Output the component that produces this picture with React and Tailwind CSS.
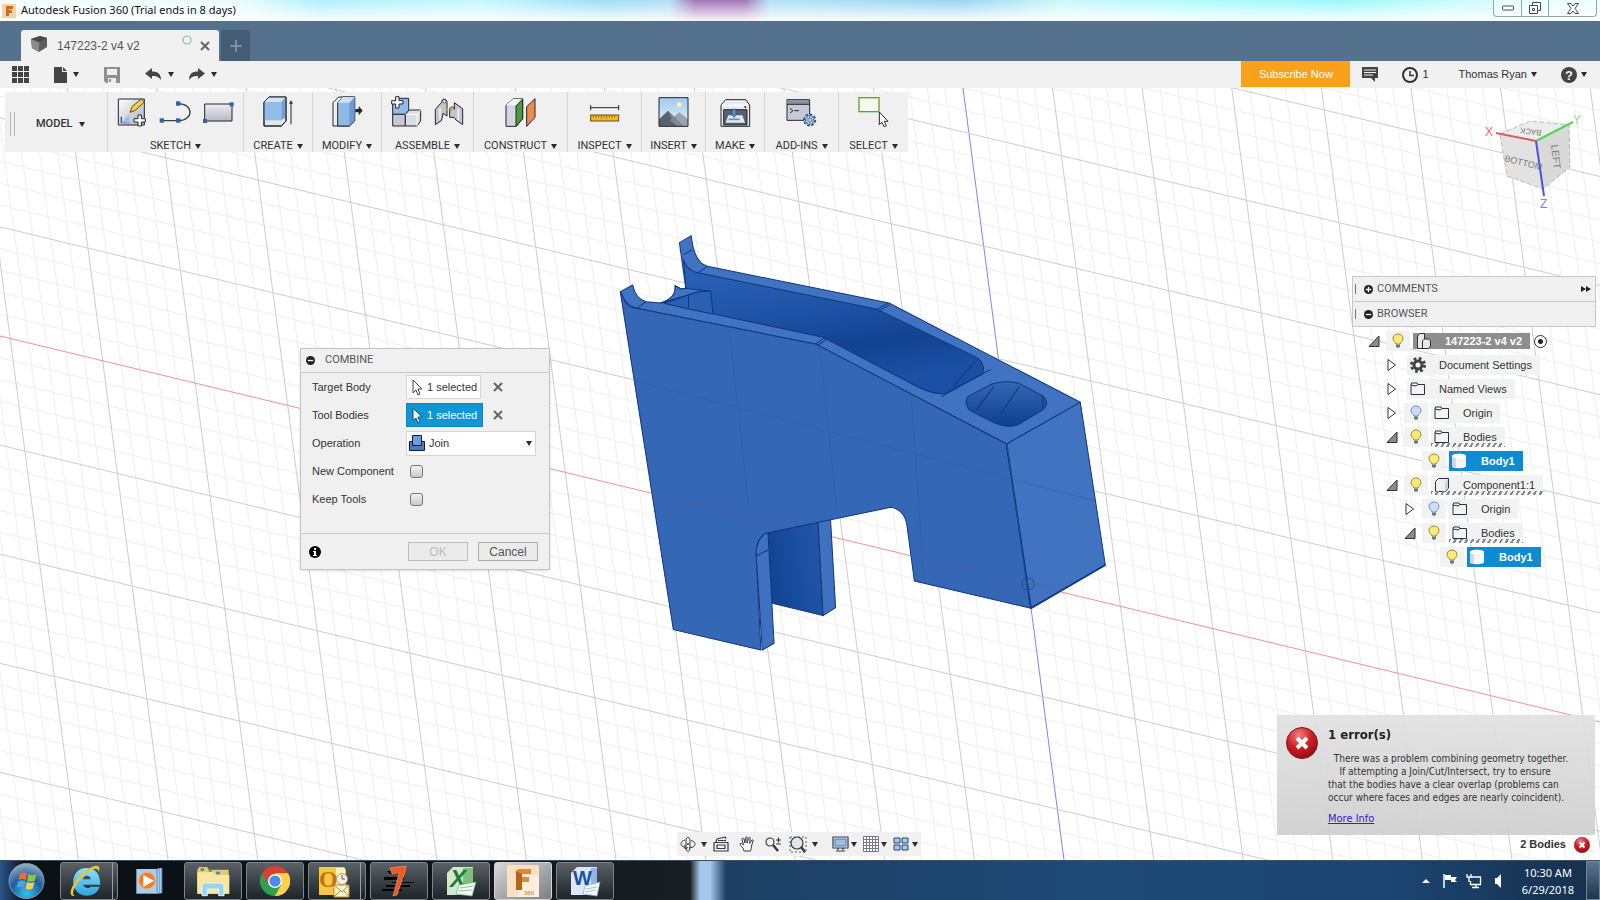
import React,{useState} from "react"

const Icon = ({vb,w,h,children,className})=>(
    <svg viewBox={vb} width={w} height={h} className={`shrink-0 ${className || ""}`} aria-hidden="true">{children}</svg>
)

const Caret = ()=>(
    <Icon vb="0 0 6 5" w="6" h="5"><path d="M0 0H6L3 5Z" fill="#2b2b2b"/></Icon>
)

const line = {stroke:"#23272e",strokeWidth:3,strokeLinejoin:"round"}

// ---------- ribbon icons ----------
const SketchIcon = ()=>(
    <Icon vb="355 290 90 93" w="30" h="31">
        <defs><linearGradient id="skg" x1="0" y1="0" x2="1" y2="1"><stop offset="0" stopColor="#fff"/><stop offset="1" stopColor="#a9aeb8"/></linearGradient></defs>
        <rect x="359" y="299" width="78" height="78" fill="url(#skg)" {...line}/>
        <path d="M368 352V370H392" fill="none" stroke="#2c5a9c" strokeWidth="4"/>
        <path d="M368 370L392 346V370Z" fill="#9dbde6"/>
        <path d="M394 339L400 322L428 299L437 308L410 333Z" fill="#f5cb55" {...line} stroke="#6b4a12"/>
        <path d="M418 347H428V358H440V368H428V380H418V368H406V358H418Z" fill="#fff" {...line}/>
    </Icon>
)
const ArcIcon = ()=>(
    <Icon vb="480 290 96 93" w="32" h="31">
        <path d="M489 364H537C585 364 585 313 537 313" fill="none" stroke="#3a3f47" strokeWidth="4"/>
        <g fill="#2f62ad"><rect x="482" y="357" width="13" height="13"/><rect x="531" y="357" width="13" height="13"/><rect x="531" y="306" width="13" height="13"/></g>
    </Icon>
)
const RectIcon = ()=>(
    <Icon vb="611 290 93 93" w="31" h="31">
        <defs><linearGradient id="rcg" x1="0" y1="0" x2="0" y2="1"><stop offset="0" stopColor="#eceef2"/><stop offset="1" stopColor="#b5b9c3"/></linearGradient></defs>
        <rect x="616" y="314" width="82" height="51" fill="url(#rcg)" {...line}/>
        <rect x="691" y="309" width="12" height="12" fill="#2f62ad"/><rect x="611" y="359" width="12" height="12" fill="#2f62ad"/>
    </Icon>
)
const CreateIcon = ()=>(
    <Icon vb="787 290 93 93" w="31" h="31">
        <path d="M790 308L805 293H856V365L842 380H790Z" fill="#dfe6f0" {...line}/>
        <path d="M790 308H842V363H790Z" fill="#92bce8"/>
        <path d="M790 308L805 293H856L842 308Z" fill="#cfe2f6"/>
        <path d="M842 308L856 293V352L842 363Z" fill="#6f9fd4"/>
        <path d="M790 308L805 293H856V365L842 380H790Z" fill="none" {...line}/>
        <path d="M871 375V312" fill="none" stroke="#23272e" strokeWidth="3"/><path d="M871 303L865 313H877Z" fill="#23272e"/>
    </Icon>
)
const ModifyIcon = ()=>(
    <Icon vb="994 290 93 93" w="31" h="31">
        <path d="M997 310L1014 293H1062V365L1046 380H997Z" fill="#eceff4" {...line}/>
        <path d="M1011 310L1026 293H1062V365L1046 380H1011Z" fill="#8fb9e6" {...line}/>
        <path d="M1046 310L1062 293V365L1046 380Z" fill="#6b9bd1"/>
        <path d="M1011 310L1026 293H1062L1046 310Z" fill="#cbe0f5"/>
        <path d="M1064 329H1074V320L1086 334L1074 348V339H1064Z" fill="#23272e"/>
    </Icon>
)
const AssembleIcon = ()=>(
    <Icon vb="1169 290 93 93" w="31" h="31">
        <path d="M1174 312L1186 297H1222V333L1212 345H1174Z" fill="#93bbe6" {...line}/>
        <path d="M1174 345H1212V380H1174Z" fill="#c4c9d2" {...line}/>
        <path d="M1212 345L1224 332H1258V365L1247 380H1212Z" fill="#dadde3" {...line}/>
        <path d="M1247 345V380M1247 345L1258 332M1212 345H1247" fill="none" stroke="#fff" strokeWidth="3"/>
        <path d="M1183 292H1193V304H1205V314H1193V326H1183V314H1171V304H1183Z" fill="#fff" {...line}/>
    </Icon>
)
const JointIcon = ()=>(
    <Icon vb="1302 290 90 93" w="30" h="31">
        <path d="M1306 330L1325 309C1325 296 1340 296 1341 309V350L1329 342L1325 363L1306 376Z" fill="#c3c7cd" {...line}/>
        <path d="M1349 332C1349 320 1362 320 1363 330V310L1388 328V376L1368 362L1362 354H1349Z" fill="#c3c7cd" {...line}/>
        <path d="M1320 325V360M1375 328V362" stroke="#f1f2f4" strokeWidth="5"/>
        <circle cx="1333" cy="306" r="5" fill="#fff" stroke="#23272e" strokeWidth="2"/>
        <path d="M1338 326L1344 334M1355 322V336" stroke="#e09a2b" strokeWidth="4"/>
    </Icon>
)
const ConstructIcon = ()=>(
    <Icon vb="74 48 93 96" w="31" h="32">
        <path d="M77 76L99 56H127V116L108 139H77Z" fill="#d3d6dc" {...line}/>
        <path d="M77 76L99 56H127L108 76Z" fill="#f6f7f9"/>
        <path d="M107 78L127 57V116L107 139Z" fill="#4e9a3f" {...line}/>
        <path d="M139 80L164 56V112L139 139Z" fill="#ef8a50" {...line}/>
    </Icon>
)
const InspectIcon = ()=>(
    <Icon vb="326 48 90 96" w="30" h="32">
        <path d="M328 83H412M328 75V91M412 75V91" {...line} fill="none"/>
        <rect x="328" y="105" width="84" height="18" fill="#edb92e" stroke="#6e4c0c" strokeWidth="3"/>
        <path d="M336 106V112M344 106V115M352 106V112M360 106V115M368 106V112M376 106V115M384 106V112M392 106V115M400 106V112" stroke="#6e4c0c" strokeWidth="2"/>
    </Icon>
)
const InsertIcon = ()=>(
    <Icon vb="533 48 93 96" w="31" h="32">
        <defs><linearGradient id="isg" x1="0" y1="0" x2="0" y2="1"><stop offset="0" stopColor="#9ec9ee"/><stop offset="1" stopColor="#e8f4fc"/></linearGradient></defs>
        <rect x="536" y="53" width="87" height="86" fill="url(#isg)"/>
        <circle cx="597" cy="74" r="7" fill="#fff3b8"/>
        <path d="M575 115L597 97L623 118V139H575Z" fill="#9aa3ae"/>
        <path d="M536 118L563 92L610 139H536Z" fill="#5a626e"/>
        <path d="M563 92L575 116L568 120L590 139H610Z" fill="#7f8894"/>
        <rect x="536" y="53" width="87" height="86" fill="none" {...line}/>
    </Icon>
)
const MakeIcon = ()=>(
    <Icon vb="719 48 93 96" w="31" h="32">
        <path d="M722 75L736 59H796L808 75V139H722Z" fill="#e9ebee" {...line}/>
        <path d="M724 76H806" stroke="#fff" strokeWidth="4"/>
        <rect x="730" y="89" width="70" height="46" fill="#59616d" {...line}/>
        <path d="M744 106H786L794 128H736Z" fill="#e3e8ee"/>
        <path d="M755 88H767V104L761 112L755 104Z" fill="#5590d6" stroke="#1d3f73" strokeWidth="2"/>
        <path d="M745 118H778" stroke="#5590d6" strokeWidth="5"/>
        <circle cx="795" cy="81" r="3" fill="#23272e"/>
    </Icon>
)
const AddinsIcon = ()=>(
    <Icon vb="917 48 93 96" w="31" h="32">
        <rect x="920" y="59" width="68" height="62" fill="#c6cad6" {...line}/>
        <rect x="922" y="61" width="64" height="11" fill="#8d909c"/>
        <path d="M920 73H988" {...line}/>
        <path d="M929 85L938 92L929 99M942 92H956" fill="none" stroke="#23272e" strokeWidth="3"/>
        <circle cx="988" cy="120" r="17" fill="#bdd6f1" stroke="#2b4d7d" strokeWidth="5" strokeDasharray="8 5"/>
        <circle cx="988" cy="120" r="13" fill="#cfe1f5" stroke="#2b4d7d" strokeWidth="2"/>
        <path d="M988 106V134M974 120H1002M978 110L998 130M998 110L978 130" stroke="#2b4d7d" strokeWidth="2"/>
        <circle cx="988" cy="120" r="5" fill="#fff" stroke="#2b4d7d" strokeWidth="2"/>
    </Icon>
)
const SelectIcon = ()=>(
    <Icon vb="1133 48 93 96" w="31" h="32">
        <rect x="1136" y="53" width="60" height="42" fill="#f5f9ef" stroke="#6aa02c" strokeWidth="4"/>
        <path d="M1197 96V134L1205 127L1211 140L1218 137L1212 124H1223Z" fill="#fff" {...line}/>
    </Icon>
)

const ribbon = [
    {name:"SKETCH",w:"w-[136px]",icons:[SketchIcon,ArcIcon,RectIcon]},
    {name:"CREATE",w:"w-[69px]",icons:[CreateIcon]},
    {name:"MODIFY",w:"w-[69px]",icons:[ModifyIcon]},
    {name:"ASSEMBLE",w:"w-[92px]",icons:[AssembleIcon,JointIcon]},
    {name:"CONSTRUCT",w:"w-[94px]",icons:[ConstructIcon]},
    {name:"INSPECT",w:"w-[74px]",icons:[InspectIcon]},
    {name:"INSERT",w:"w-[64px]",icons:[InsertIcon]},
    {name:"MAKE",w:"w-[59px]",icons:[MakeIcon]},
    {name:"ADD-INS",w:"w-[74px]",icons:[AddinsIcon]},
    {name:"SELECT",w:"w-[70px]",icons:[SelectIcon]},
]

function Ribbon(){
    return (
        <div className="absolute left-[5px] top-1 flex h-[60px] bg-[#f0f0f0] font-[Roboto,sans-serif] text-[11px] text-[#333]">
            <div className="flex w-[102px] items-center pt-1">
                <div className="ml-[5px] h-6 w-[5px] border-x border-[#b5b5b5]"></div>
                <button className="ml-[21px] flex items-center gap-1.5 font-medium">MODEL <Caret/></button>
            </div>
            {ribbon.map((g)=>(
                <div className={`${g.w} flex flex-col items-center justify-between border-l border-[#d4d4d4] pt-1`} key={g.name}>
                    <div className="flex h-8 items-start gap-3">
                        {g.icons.map((I,i)=>(<button key={i} aria-label={`${g.name} ${i + 1}`}><I/></button>))}
                    </div>
                    <button className="flex items-center gap-1 leading-3">{g.name} <Caret/></button>
                </div>
            ))}
        </div>
    )
}

// ---------- 3d scene ----------
// grid lines are parallel, a major one at every fifth step
const gridV = []
for(let i=-65;i<=45;i++) gridV.push({x:963 + i * 17.92,major:i % 5 === 0,axis:i === 0})
const gridH = []
for(let i=-30;i<=30;i++) gridH.push({y:248 + i * 21.82,major:i % 5 === 0,axis:i === 0})

function GridLines(){
    return (
        <g fill="none">
            {[false,true].map((m)=>(
                <g key={String(m)} stroke={m ? "#cbcdce" : "#edeff0"}>
                    {gridV.filter(l=>l.major === m).map((l)=>(
                        <path key={l.x} d={`M${l.x} 0L${l.x + 101} 772`} stroke={l.axis ? "#8585ea" : undefined}/>
                    ))}
                    {gridH.filter(l=>l.major === m).map((l)=>(
                        <path key={l.y} d={`M0 ${l.y}L1600 ${l.y + 386}`} stroke={l.axis ? "#f29292" : undefined}/>
                    ))}
                </g>
            ))}
        </g>
    )
}

function Scene(){
    const front = "M60 215L76 248Q88 264 108 265L640 373L1203 672L1275 1165L930 1083L908 915Q900 868 860 862L490 940Q463 958 462 1000L476 1290L217 1229Z"
    return (
        <svg viewBox="0 0 1600 772" preserveAspectRatio="xMidYMid slice" className="absolute inset-0 h-full w-full" role="img" aria-label="Model view">
            <defs>
                <linearGradient id="wall" x1="0" y1="0" x2="0.35" y2="1"><stop offset="0" stopColor="#2d64b8"/><stop offset="0.45" stopColor="#1f54a9"/><stop offset="0.75" stopColor="#134391"/><stop offset="1" stopColor="#1a4fa4"/></linearGradient>
                <linearGradient id="leg" x1="1" y1="0" x2="0" y2="0.3"><stop offset="0" stopColor="#2458aa"/><stop offset="1" stopColor="#134596"/></linearGradient>
                <linearGradient id="hole" x1="0" y1="0" x2="0" y2="1"><stop offset="0" stopColor="#3467b5"/><stop offset="1" stopColor="#0f3f8e"/></linearGradient>
                <clipPath id="faces"><path d={front}/><path d="M1203 672L1421 547L1495 1035L1275 1165Z"/></clipPath>
            </defs>
            <GridLines/>
            <g transform="translate(600 132) scale(0.338 0.3333)" stroke="#12377c" strokeWidth="3" strokeLinejoin="round">
                <path d="M497 940L645 905L660 1187L510 1150Z" fill="url(#leg)"/>
                <path d="M645 905L682 897L697 1163L660 1187Z" fill="#3e72c0"/>
                <path d="M60 215L97 195Q104 236 137 245L180 249Q228 232 222 197L240 207L254 205L235 68L270 47Q278 128 318 139L855 249L1421 547L1203 672L640 373L108 265Q80 262 60 215Z" fill="#4074c2"/>
                <path d="M254 205L247 118Q258 154 290 158L820 268L1110 410Q1142 428 1132 462L1018 522Q975 522 930 495L660 352L190 250L240 222Z" fill="url(#wall)"/>
                <path d="M190 250L262 224Q300 210 328 214L334 282L262 267Z" fill="#2a60b3"/>
                <path d="M180 249L262 224Q300 210 325 214L254 205L240 207L222 197Q228 232 180 249Z" fill="#4074c2"/>
                <path d="M262 224V265M247 104L272 90M290 158L318 139M108 265L137 245M820 268L850 250M826 272L857 254M636 373L666 352M644 376L672 357M1110 425Q1070 470 1045 500" fill="none"/>
                <path d="M1010 530L1155 448" fill="none"/>
                <path d="M1088 530L1160 492Q1200 480 1240 490L1310 528Q1332 548 1312 568L1235 615Q1200 625 1165 608L1095 572Q1075 550 1088 530Z" fill="url(#hole)"/>
                <path d="M1112 572L1165 500M1185 582L1240 500M1310 530V565" fill="none"/>
                <path d={front} fill="#3568b7"/>
                <path d="M1203 672L1421 547L1495 1035L1275 1165Z" fill="#4174c1"/>
                <path d="M490 940Q463 958 462 1000L480 1290L515 1270L497 940Z" fill="#3e72c0"/>
                <path d="M462 1008L497 990" fill="none"/>
                <path d="M1275 1165L1495 1035M1203 672L1275 1165" fill="none" strokeWidth="5"/>
                <circle cx="1266" cy="1092" r="18" fill="none" stroke="#264f95"/>
                <g clipPath="url(#faces)" stroke="#2f5ca6" strokeWidth="3" opacity="0.5" fill="none">
                    <path d="M0 455L1568 870M380 300L440 860M650 380L710 960M920 520L960 1100M1170 420L1290 1300M0 -20L1568 520"/>
                    <path d="M0 782L1568 1163" stroke="#6a559c"/>
                </g>
            </g>
        </svg>
    )
}

function ViewCube(){
    return (
        <svg viewBox="1480 24 110 100" className="absolute right-2.5 top-6 h-[100px] w-[110px]" role="img" aria-label="View cube">
            <path d="M1500 46L1530 33L1569 37L1536 53Z" fill="#ededed"/>
            <path d="M1500 46L1536 53L1543 101L1507 88Z" fill="#e2e2e2"/>
            <path d="M1536 53L1569 37L1570 79L1543 101Z" fill="#d9d9d9"/>
            <path d="M1500 46L1530 33L1569 37L1570 79L1543 101L1507 88Z" fill="none" stroke="#bdbdbd" strokeDasharray="5 2"/>
            <g fontFamily="Liberation Sans, sans-serif" fill="#7d7d7d">
                <text x="1504" y="73" fontSize="9" transform="rotate(14 1504 73)">BOTTOM</text>
                <text x="1551" y="57" fontSize="10" transform="rotate(83 1551 57)">LEFT</text>
                <text x="1522" y="39" fontSize="8" transform="rotate(187 1532 40)">BACK</text>
            </g>
            <path d="M1496 45L1536 53" stroke="#e05a5a" strokeWidth="2"/>
            <path d="M1536 53L1573 34" stroke="#52d452" strokeWidth="2"/>
            <path d="M1536 53L1544 108" stroke="#5252dc" strokeWidth="2"/>
            <g fontFamily="Liberation Sans, sans-serif" fontSize="12">
                <text x="1485" y="48" fill="#ef6b6b">X</text>
                <text x="1573" y="36" fill="#8be88b">Y</text>
                <text x="1540" y="120" fill="#8080f0">Z</text>
            </g>
        </svg>
    )
}

// ---------- combine dialog ----------
const CursorIcon = ({dark})=>(
    <Icon vb="0 0 12 17" w="12" h="17"><path d="M2 1V14L5 11L7 16L9 15L7 10H11Z" fill={dark ? "#e8f4fb" : "#fff"} stroke={dark ? "#1d4f6e" : "#444"} strokeLinejoin="round"/></Icon>
)
const CrossIcon = ()=>(
    <Icon vb="0 0 10 10" w="10" h="10"><path d="M1 1L9 9M9 1L1 9" stroke="#666" strokeWidth="2"/></Icon>
)
const MinusDot = ({plus})=>(
    <Icon vb="0 0 10 10" w="9" h="9"><circle cx="5" cy="5" r="5" fill="#222"/><path d={plus ? "M2 5H8M5 2V8" : "M2 5H8"} stroke="#fff" strokeWidth="1.5"/></Icon>
)

const rowClass = "flex h-7 items-center"
const labelClass = "w-[94px] shrink-0"
const checkClass = "ml-1 size-[13px] appearance-none rounded-[3px] border border-[#777] bg-gradient-to-b from-[#f2f2f2] to-[#c9c9c9]"

function CombineDialog(){
    const [op,setOp] = useState("Join")
    return (
        <div className="absolute left-[300px] top-[260px] w-[250px] border border-[#c4c4c4] bg-[#f0f0f0] text-[11px] text-[#333] shadow-sm">
            <div className="flex h-6 items-center gap-2.5 border-b border-[#c8c8c8] pl-[5px] font-[Roboto,sans-serif] text-[#555]"><MinusDot/> COMBINE</div>
            <div className="h-40 pl-[11px]">
                <div className={rowClass}>
                    <span className={labelClass}>Target Body</span>
                    <button className="flex h-6 w-[75px] items-center gap-1 whitespace-nowrap border border-[#d5d5d5] bg-white pl-1"><CursorIcon/>1 selected</button>
                    <button className="ml-3" aria-label="Clear target body"><CrossIcon/></button>
                </div>
                <div className={rowClass}>
                    <span className={labelClass}>Tool Bodies</span>
                    <button className="flex h-6 w-[77px] items-center gap-1 whitespace-nowrap border border-[#0d86bd] bg-[#0f96d4] pl-1 text-white"><CursorIcon dark/>1 selected</button>
                    <button className="ml-2.5" aria-label="Clear tool bodies"><CrossIcon/></button>
                </div>
                <div className={rowClass}>
                    <label className={labelClass} htmlFor="op">Operation</label>
                    <div className="flex h-[25px] w-[130px] items-center border border-[#d5d5d5] bg-white pl-0.5 pr-[3px]">
                        <Icon vb="0 0 16 16" w="16" h="16"><path d="M0.500 6.500H15.500V15.500H0.500Z" fill="#4a7dbd" stroke="#0d1d33"/><path d="M3.500 0.500H12.500V10.500H3.500Z" fill="#6a9ddb" stroke="#0d1d33"/></Icon>
                        <select id="op" value={op} onChange={(e)=>setOp(e.target.value)} className="ml-1 h-full flex-1 appearance-none bg-white outline-none">
                            <option>Join</option>
                            <option>Cut</option>
                            <option>Intersect</option>
                        </select>
                        <Caret/>
                    </div>
                </div>
                <div className={rowClass}>
                    <label className={labelClass} htmlFor="newc">New Component</label>
                    <input id="newc" type="checkbox" className={checkClass}/>
                </div>
                <div className={rowClass}>
                    <label className={labelClass} htmlFor="keep">Keep Tools</label>
                    <input id="keep" type="checkbox" className={checkClass}/>
                </div>
            </div>
            <div className="flex h-9 items-center border-t border-[#c8c8c8] pl-2 pr-[11px]">
                <Icon vb="0 0 12 12" w="12" h="12"><circle cx="6" cy="6" r="6" fill="#000"/><path d="M5 2H7V4H5ZM4 5H7V9H8V10H4V9H5V6H4Z" fill="#fff"/></Icon>
                <button disabled className="ml-auto h-[19px] w-[60px] border border-[#bdbdbd] bg-[#ebebeb] text-xs leading-none text-[#bbb]">OK</button>
                <button className="ml-2.5 h-[19px] w-[60px] border border-[#adadad] bg-[#ebebeb] text-xs leading-none text-[#555]">Cancel</button>
            </div>
        </div>
    )
}

// ---------- browser tree ----------
const Bulb = ({off})=>(
    <Icon vb="0 0 12 16" w="12" h="16">
        <path d="M6 1C2.500 1 1 3.500 1 5.500C1 8 3.500 9 4 11H8C8.500 9 11 8 11 5.500C11 3.500 9.500 1 6 1Z" fill={off ? "#c9defa" : "#fbe97a"} stroke={off ? "#7390bd" : "#a08a28"}/>
        <path d="M4 11.500H8V14L6 15L4 14Z" fill="#777"/>
    </Icon>
)
const Folder = ()=>(
    <Icon vb="0 0 16 14" w="16" h="14"><path d="M1 3V12.500H14.500V2.500H8L7 1H1.500L1 3L6 4L8 2.500" fill="#f4f5f6" stroke="#2c313a"/></Icon>
)
const Gear = ()=>(
    <Icon vb="0 0 16 16" w="16" h="16"><circle cx="8" cy="8" r="6.500" fill="none" stroke="#444" strokeWidth="3" strokeDasharray="2.700 2.400"/><circle cx="8" cy="8" r="4" fill="none" stroke="#444" strokeWidth="3"/></Icon>
)
const DocIcon = ()=>(
    <Icon vb="0 0 16 16" w="16" h="16"><path d="M1.500 3L4 .5H8.500V6H12.500L14.500 8V13L12.500 15.500H1.500Z" fill="#e8eaed" stroke="#333"/><path d="M6.500 15V8L8.500 6" fill="none" stroke="#333"/></Icon>
)
const BoxIcon = ()=>(
    <Icon vb="0 0 16 16" w="16" h="16"><path d="M1.500 4.500L4.500 1.500H14.500V11L11.500 14.500H1.500Z" fill="#eef0f2" stroke="#2c313a"/><path d="M11 5V14L14 11V2Z" fill="#cfd2d6"/></Icon>
)
const Cylinder = ()=>(
    <Icon vb="0 0 14 16" w="14" h="16"><path d="M0 3C0 0 14 0 14 3V13C14 16 0 16 0 13Z" fill="#f4f6f8"/><path d="M0 4V13C0 14 2 15 4 15V5Z" fill="#d3d8dd"/><ellipse cx="7" cy="3" rx="7" ry="2.200" fill="#fff"/></Icon>
)
const Arrow = ({open})=>(
    <Icon vb="0 0 12 14" w="12" h="14">
        {open ? <path d="M1 12.500H11V2Z" fill="#8b8b8b" stroke="#333"/> : <path d="M2 1.500V12.500L9.500 7Z" fill="#fff" stroke="#333"/>}
    </Icon>
)

const tree = [
    {text:"147223-2 v4 v2",pad:"pl-[10px]",arrow:"open",bulb:"on",icon:DocIcon,kind:"root"},
    {text:"Document Settings",pad:"pl-[28px]",arrow:"closed",icon:Gear},
    {text:"Named Views",pad:"pl-[28px]",arrow:"closed",icon:Folder},
    {text:"Origin",pad:"pl-[28px]",arrow:"closed",bulb:"off",icon:Folder},
    {text:"Bodies",pad:"pl-[28px]",arrow:"open",bulb:"on",icon:Folder,kind:"hatched"},
    {text:"Body1",pad:"pl-[70px]",bulb:"on",icon:Cylinder,kind:"body"},
    {text:"Component1:1",pad:"pl-[28px]",arrow:"open",bulb:"on",icon:BoxIcon,kind:"hatched"},
    {text:"Origin",pad:"pl-[46px]",arrow:"closed",bulb:"off",icon:Folder},
    {text:"Bodies",pad:"pl-[46px]",arrow:"open",bulb:"on",icon:Folder,kind:"hatched"},
    {text:"Body1",pad:"pl-[88px]",bulb:"on",icon:Cylinder,kind:"body"},
]
const kinds = {
    root:"h-4 bg-[#8e8e8e] pr-2 font-bold text-white",
    body:"h-5 bg-[#0d8bd3] pr-2 font-bold text-white",
    hatched:"h-5 bg-[#f1f2f2] pr-2",
}

function BrowserPanel(){
    return (
        <div className="absolute right-1 top-[188px] w-[244px] text-[11px] text-[#333]">
            <div className="border border-[#c8c8c8] bg-[#f0f0f0] font-[Roboto,sans-serif] text-[#555]">
                <div className="flex h-[25px] items-center border-b border-[#c8c8c8] pl-0.5 pr-1">
                    <div className="h-2.5 w-px bg-[#777]"></div>
                    <button className="ml-2 flex items-center gap-1"><MinusDot plus/> COMMENTS</button>
                    <button className="ml-auto" aria-label="Expand"><Icon vb="0 0 10 6" w="10" h="6"><path d="M0 0L5 3L0 6ZM5 0L10 3L5 6Z" fill="#222"/></Icon></button>
                </div>
                <div className="flex h-6 items-center pl-0.5">
                    <div className="h-2.5 w-px bg-[#777]"></div>
                    <button className="ml-2 flex items-center gap-1"><MinusDot/> BROWSER</button>
                </div>
            </div>
            <ul className="pt-0.5">
                {tree.map((n,i)=>(
                    <li className={`${n.pad} flex h-6 items-center`} key={i}>
                        {n.arrow ? <button className="flex w-6 justify-center" aria-label={`Toggle ${n.text}`}><Arrow open={n.arrow === "open"}/></button> : null}
                        {n.bulb ? <button className="flex h-5 w-6 items-center justify-center bg-[#f1f2f2]" aria-label={`Show ${n.text}`}><Bulb off={n.bulb === "off"}/></button> : null}
                        <div className={`${kinds[n.kind] || "h-5 bg-[#f1f2f2] pr-2"} relative ml-[3px] flex items-center`}>
                            <span className="flex w-8 pl-[3px]"><n.icon/></span>
                            {n.text}
                            {n.kind === "hatched" ? <span className="absolute inset-x-0 bottom-0 h-1 bg-[repeating-linear-gradient(120deg,#7c8794_0_2px,transparent_2px_5px)]"></span> : null}
                        </div>
                        {n.kind === "root" ? <input type="radio" name="active" defaultChecked aria-label="Activate" className="ml-1 size-[13px] appearance-none rounded-full border border-[#333] bg-[radial-gradient(#222_0_2px,#fff_3px)]"/> : null}
                    </li>
                ))}
            </ul>
        </div>
    )
}

// ---------- error toast ----------
const ErrorDot = ({size})=>(
    <Icon vb="0 0 32 32" w={size} h={size}>
        <defs><radialGradient id="err" cx="0.4" cy="0.25" r="0.8"><stop offset="0" stopColor="#f08080"/><stop offset="0.5" stopColor="#cf1f26"/><stop offset="1" stopColor="#8d0c12"/></radialGradient></defs>
        <circle cx="16" cy="16" r="15.500" fill="url(#err)" stroke="#7d1a1e"/>
        <path d="M11 11L21 21M21 11L11 21" stroke="#fff" strokeWidth="4"/>
    </Icon>
)

function ErrorToast(){
    return (
        <div className="absolute bottom-1 right-[5px] w-[318px]">
            <div className="flex h-[120px] gap-[10px] bg-gradient-to-b from-[#e2e2e2]/95 to-[#d0d0d0]/95 pl-[9px] pt-3 font-['DejaVu_Sans_Condensed','DejaVu_Sans',sans-serif] text-[10px] leading-[13px] text-[#333]">
                <ErrorDot size="32"/>
                <div>
                    <h2 className="text-[13px] font-bold leading-4 text-[#222]">1 error(s)</h2>
                    <p className="mt-[9px] whitespace-pre">{"  There was a problem combining geometry together.\n    If attempting a Join/Cut/Intersect, try to ensure\nthat the bodies have a clear overlap (problems can\noccur where faces and edges are nearly coincident)."}</p>
                    <a href="#" className="mt-2 block text-[11px] text-[#3322cc] underline">More Info</a>
                </div>
            </div>
            <div className="flex h-[21px] items-center justify-end gap-2 pb-0.5 pr-[5px] text-[11px] font-bold text-[#333]">2 Bodies <ErrorDot size="16"/></div>
        </div>
    )
}

// ---------- navigation bar ----------
function NavBar(){
    const s = {fill:"none",stroke:"#333a44",strokeWidth:1.2,strokeLinejoin:"round"}
    return (
        <div className="absolute bottom-1 left-[677px] flex h-6 items-center bg-[#f1f1f1] px-[3px]">
            <button className="flex items-center gap-[5px]" aria-label="Orbit">
                <Icon vb="0 0 16 16" w="16" h="16"><path d="M5 4C1 5 0 8 2 10L5 11.500M11 4.500C16 6 16 9 13 11L9 12M6 5C6 0 10 0 10 5V11C10 17 6 17 6 11ZM7 8H9M8 7V9M5 9V13L8 11.500" {...s} strokeWidth="1"/></Icon><Caret/>
            </button>
            <button className="ml-1.5" aria-label="Look at">
                <Icon vb="0 0 16 16" w="16" h="16"><path d="M1 6.500H15V15H1ZM4 9H12V12.500H4ZM3 6L4 3L12 1L13 3M5 4.500H13" {...s}/></Icon>
            </button>
            <button className="ml-2.5" aria-label="Pan">
                <Icon vb="0 0 16 16" w="16" h="16"><path d="M5 15C5 12 1 9.500 1 8C1 7 2.500 7 4.500 9L3 3C3 2 4.500 2 5 3L6 7L6.500 1.500C7 .5 8 .5 8 1.500V7L10 1.500C10.500 1 11.500 1.500 11.300 2.500L10.500 7.500L13 4C14 3.500 14.500 4.200 14 5L12.500 10C12.500 12 12 13 11.500 15Z" {...s} strokeWidth="1" fill="#fff"/></Icon>
            </button>
            <button className="ml-2.5" aria-label="Zoom">
                <Icon vb="0 0 16 16" w="16" h="16"><circle cx="5" cy="6" r="4" {...s}/><path d="M8 9L13 15" stroke="#333a44" strokeWidth="2.500"/><path d="M11 4H16M13.500 1.500V6.500M11 8H16" {...s}/></Icon>
            </button>
            <button className="ml-2 flex items-center gap-[5px]" aria-label="Fit">
                <Icon vb="0 0 18 17" w="18" h="17"><path d="M1 1H17V16H1Z" {...s} strokeDasharray="2 2" strokeWidth="0.800"/><circle cx="8" cy="7" r="6" {...s} fill="#dfe8e2"/><path d="M12 11L16 16" stroke="#333a44" strokeWidth="2.500"/></Icon><Caret/>
            </button>
            <button className="ml-3.5 flex items-center gap-0.5" aria-label="Display settings">
                <Icon vb="0 0 17 16" w="17" h="16"><path d="M1 1H16V12H1Z" {...s} fill="#e7ebf0"/><path d="M3 3H14V10H3Z" fill="#9cbfe9" stroke="#4f77ad"/><path d="M6 12V14M11 12V14M4 15H13" {...s}/></Icon><Caret/>
            </button>
            <button className="ml-1.5 flex items-center gap-0.5" aria-label="Grid settings">
                <Icon vb="0 0 16 16" w="16" h="16"><path d="M.5 .5H15.500V15.500H.5ZM3.500 0V16M6.500 0V16M9.500 0V16M12.500 0V16M0 3.500H16M0 6.500H16M0 9.500H16M0 12.500H16" fill="#fff" stroke="#6a7079" strokeWidth="0.900"/></Icon><Caret/>
            </button>
            <button className="ml-1.5 flex items-center gap-[3px]" aria-label="Viewports">
                <Icon vb="0 0 16 14" w="16" h="14"><path d="M1 1H7V6H1ZM9 1H15V6H9ZM1 8H7V13H1ZM9 8H15V13H9Z" fill="#a9c7ec" stroke="#27456f"/></Icon><Caret/>
            </button>
        </div>
    )
}

// ---------- windows taskbar ----------
const IE = ()=>(
    <Icon vb="210 36 98 102" w="33" h="34">
        <defs><linearGradient id="ieg" x1="0" y1="0" x2="0" y2="1"><stop offset="0" stopColor="#8fe0fb"/><stop offset="1" stopColor="#2aa5e0"/></linearGradient></defs>
        <path d="M262 48C238 48 222 66 222 90C222 114 240 131 263 131C283 131 296 120 301 104H274C271 110 256 110 252 98H303C304 66 288 48 262 48ZM251 82C254 68 273 68 275 82Z" fill="url(#ieg)"/>
        <path d="M228 131C208 138 210 112 232 84C255 55 290 34 299 44C302 49 300 56 298 60C298 50 291 47 279 53C256 64 224 100 222 122C221 128 223 131 228 131Z" fill="#f2c230"/>
    </Icon>
)
const Player = ()=>(
    <Icon vb="408 52 84 84" w="28" h="28">
        <path d="M470 58L490 54V130L470 133Z" fill="#6fa0cf"/><path d="M478 56V131M484 55V131" stroke="#d7ecfb" strokeWidth="2"/>
        <rect x="412" y="58" width="60" height="74" fill="#a9cdea"/>
        <circle cx="444" cy="93" r="25" fill="#ee7c28" stroke="#f8b27c" strokeWidth="3"/>
        <path d="M433 76L465 93L433 112Z" fill="#fff"/>
    </Icon>
)
const Explorer = ()=>(
    <Icon vb="588 44 102 96" w="34" h="32">
        <path d="M592 58L598 50H622L626 58H686V130H592Z" fill="#e6cb6e"/>
        <path d="M592 66H640L648 74H688V130H592Z" fill="#f8e79f"/>
        <path d="M602 54H612V62H602ZM626 56H636V64H626Z" fill="#4d9a4b"/>
        <path d="M648 64H660V72H648Z" fill="#4b87c9"/>
        <path d="M606 136V108C606 98 616 98 622 98H656C668 98 672 102 672 110V136H656V116H622V136Z" fill="#9ad3f2" stroke="#e2f5ff" strokeWidth="3"/>
    </Icon>
)
const Chrome = ()=>(
    <Icon vb="0 0 32 32" w="30" h="30">
        <path d="M16 16L2.100 8A16 16 0 0 1 29.900 8Z" fill="#d9412f"/>
        <path d="M16 16L29.900 8A16 16 0 0 1 16 32Z" fill="#f9d14a"/>
        <path d="M16 16V32A16 16 0 0 1 2.100 8Z" fill="#2fa04f"/>
        <path d="M16 8H29.900L23 20Z" fill="#f9d14a"/><path d="M9 20L2.100 8L16 8Z" fill="#d9412f"/><path d="M9 20L16 32L23 20Z" fill="#2fa04f"/>
        <path d="M23 20L16 32A16 16 0 0 0 29.900 8H16Z" fill="#f9d14a"/>
        <circle cx="16" cy="16" r="7.500" fill="#fff"/><circle cx="16" cy="16" r="6" fill="#4b8af0"/>
    </Icon>
)
const Outlook = ()=>(
    <Icon vb="0 0 34 34" w="34" h="34">
        <path d="M3 3H28L30 6V31H3Z" fill="#f6c644"/><path d="M20 4H29V30H20Z" fill="#fdf0c2"/>
        <text x="3" y="23" fontFamily="Liberation Serif, serif" fontSize="24" fontWeight="700" fill="#c2720f">O</text>
        <circle cx="26" cy="15" r="5.500" fill="#f4f1e6" stroke="#b79b54"/><path d="M26 11V15H29" fill="none" stroke="#555"/>
        <path d="M18 21H33V33H18Z" fill="#fbf3d2" stroke="#b98c2a"/><path d="M18 21L26 28L33 21M18 33L24 27M33 33L28 27" fill="none" stroke="#b98c2a"/>
    </Icon>
)
const Seven = ()=>(
    <Icon vb="0 0 34 32" w="34" h="32">
        <path d="M5 6H20L19 9H8ZM2 12H22V15H2ZM10 17H32V18H10ZM4 20H28V22H4ZM0 24H20V26H0Z" fill="#000"/>
        <path d="M8 3L24 1L23 7L15 30L11 31L17 8L10 9Z" fill="#ef5a22" stroke="#ffb08a" strokeWidth="0.500"/>
    </Icon>
)
const Excel = ()=>(
    <Icon vb="0 0 32 32" w="32" h="32">
        <path d="M2 8L8 2H28V30H2Z" fill="#cfe8cf"/><path d="M18 3H28V29H18Z" fill="#7dbf7b"/>
        <text x="5" y="22" fontFamily="Liberation Sans, sans-serif" fontSize="24" fontWeight="700" fontStyle="italic" fill="#1f7a35">X</text>
        <path d="M14 20L31 17L27 31L11 29Z" fill="#f3faf3" stroke="#6bab6b" strokeWidth="0.700"/><path d="M15 23L28 21M14 26L27 25" stroke="#8fc48f"/>
    </Icon>
)
const Fusion = ()=>(
    <Icon vb="0 0 32 32" w="32" h="32">
        <path d="M0 0H32V32H0Z" fill="#fbdfc4"/><path d="M14 10H32V32H10Z" fill="#fdeedf"/>
        <path d="M9 6Q10 4 12 4H24V9H15V12H22V17H15V25H9Z" fill="#d98a3a"/><path d="M9 6L15 9V25H9Z" fill="#b5651a"/>
        <text x="17" y="30" fontFamily="Liberation Sans, sans-serif" fontSize="6" fontWeight="700" fill="#d99a5b">360</text>
    </Icon>
)
const Word = ()=>(
    <Icon vb="0 0 32 32" w="32" h="32">
        <path d="M2 8L8 2H28V30H2Z" fill="#dce8f8"/><path d="M22 3H28V29H22Z" fill="#8fb4e6"/>
        <text x="4" y="20" fontFamily="Liberation Sans, sans-serif" fontSize="20" fontWeight="700" fill="#1c50a8">W</text>
        <path d="M16 21L31 17L28 31L14 29Z" fill="#f7fafe" stroke="#7fa2d6" strokeWidth="0.700"/><path d="M17 24L28 22M16 27L27 25" stroke="#a7c0e6"/>
    </Icon>
)
const apps = [
    {name:"Internet Explorer",icon:IE,stack:true},
    {name:"Media Player",icon:Player,idle:true},
    {name:"Explorer",icon:Explorer},
    {name:"Chrome",icon:Chrome},
    {name:"Outlook",icon:Outlook,stack:true},
    {name:"Seven",icon:Seven},
    {name:"Excel",icon:Excel},
    {name:"Fusion 360",icon:Fusion,active:true},
    {name:"Word",icon:Word},
]
const appClass = (a)=>{
    if(a.idle) return "border-transparent"
    if(a.active) return "border-[#d5d5d5] bg-gradient-to-br from-[#d8d8d8] to-[#7d7f81]"
    return "border-[#7f868b] bg-gradient-to-b from-[#5b6166] to-[#1d252a]"
}

function Taskbar(){
    return (
        <div className="flex h-10 shrink-0 items-center border-t border-[#3c5063] bg-[linear-gradient(to_right,#2b568c_0,#0a1016_24px,#0c1318_400px,#171f23_690px,#a5c8ec_700px,#a5c8ec_710px,#1d3f63_726px,#1f4a78_1100px,#1b4470_1400px,#16304c_1600px)]">
            <button className="ml-2 mr-[15px]" aria-label="Start">
                <Icon vb="24 37 112 108" w="37" h="36">
                    <defs><radialGradient id="orb" cx="0.5" cy="0.85" r="0.9"><stop offset="0" stopColor="#33c3ee"/><stop offset="0.5" stopColor="#1f5d9c"/><stop offset="1" stopColor="#a9bccb"/></radialGradient></defs>
                    <circle cx="80" cy="91" r="53" fill="url(#orb)" stroke="#7f9cb3" strokeWidth="3"/>
                    <path d="M60 68Q70 62 82 68L78 88Q68 82 56 88Z" fill="#ef6a35"/>
                    <path d="M86 70Q98 76 110 70L105 90Q94 96 82 90Z" fill="#8cc63f"/>
                    <path d="M55 92Q66 87 77 92L73 111Q62 106 50 112Z" fill="#4aa3e8"/>
                    <path d="M81 94Q92 100 104 94L99 114Q88 120 77 114Z" fill="#fbd03c"/>
                </Icon>
            </button>
            <div className="flex gap-1">
                {apps.map((a)=>(
                    <button key={a.name} aria-label={a.name} className={`${appClass(a)} relative flex h-[38px] w-[58px] items-center justify-center rounded-[3px] border ${a.stack ? "pr-2" : a.idle ? "pr-1" : ""}`}>
                        <a.icon/>
                        {a.stack ? <span className="absolute inset-y-0 right-1 w-px bg-[#9aa0a5]"></span> : null}
                    </button>
                ))}
            </div>
            <div className="ml-auto flex items-center">
                <button aria-label="Hidden icons"><Icon vb="0 0 8 4" w="8" h="4"><path d="M0 4L4 0L8 4Z" fill="#fff"/></Icon></button>
                <Icon vb="0 0 16 16" w="16" h="16" className="ml-3"><path d="M2 1V15" stroke="#fff" strokeWidth="1.500"/><path d="M3 2H9V4H15L13 7L15 9H9V7H3Z" fill="#fff"/></Icon>
                <Icon vb="0 0 16 16" w="16" h="16" className="ml-2"><path d="M5 4H14.500V11.500H4.500V8M10 12V14M6 14.500H13" fill="none" stroke="#fff" strokeWidth="1.300"/><path d="M1 1V4H5V1M3 4V9" fill="none" stroke="#fff" strokeWidth="1.300"/></Icon>
                <Icon vb="0 0 8 14" w="8" h="14" className="ml-3"><path d="M1 4H3L7 0V14L3 10H1Z" fill="#fff"/></Icon>
                <div className="ml-5 mr-3 text-center font-['Noto_Sans',sans-serif] text-[11px] leading-[17px] text-white">
                    <div>10:30 AM</div>
                    <div>6/29/2018</div>
                </div>
                <button aria-label="Show desktop" className="h-[39px] w-3.5 border border-[#6f859b] bg-gradient-to-b from-[#5d7690] to-[#20354c]"></button>
            </div>
        </div>
    )
}

function TitleBar(){
    return (
        <div className="flex h-[21px] shrink-0 items-center bg-[linear-gradient(to_bottom,rgba(255,255,255,0.1)_0%,rgba(255,255,255,0.9)_95%),linear-gradient(to_right,#f2fdff_0,#e8fcff_240px,#a5eefb_320px,#bff7fd_480px,#8fdcf3_600px,#a9d9f0_670px,#9868b0_695px,#9868b0_745px,#a9e0f3_770px,#8fd0ee_960px,#c5f7fb_1060px,#a4fbfb_1200px,#8ff7f8_1340px,#c3fcfb_1460px,#e5fffd_1600px)]">
            <Icon vb="0 0 14 14" w="14" h="14" className="ml-0.5"><path d="M0 0H14V14H0Z" fill="#f7d2a9"/><path d="M4 2H11V5H7V6H10V9H7V12H4Z" fill="#c8701e"/></Icon>
            <span className="ml-[5px] font-['Noto_Sans',sans-serif] text-[11px] text-[#111]">Autodesk Fusion 360 (Trial ends in 8 days)</span>
            <div className="ml-auto mr-[3px] flex h-[17px] self-start rounded-b border border-t-0 border-[#8fa9b0] bg-white/40">
                <button className="flex w-7 items-center justify-center border-r border-[#8fa9b0]" aria-label="Minimize"><Icon vb="0 0 12 6" w="12" h="6"><rect x="0.500" y="1" width="11" height="4" rx="1" fill="#fff" stroke="#444b55"/></Icon></button>
                <button className="flex w-[27px] items-center justify-center border-r border-[#8fa9b0]" aria-label="Restore"><Icon vb="0 0 12 12" w="12" h="12"><path d="M3.500 3V.5H11.500V8.500H9" fill="#fff" stroke="#444b55"/><path d="M.5 3.500H8.500V11.500H.5ZM3.500 6.500H5.500V8.500H3.500Z" fill="#fff" stroke="#444b55"/></Icon></button>
                <button className="flex w-[47px] items-center justify-center" aria-label="Close"><Icon vb="0 0 12 11" w="12" h="11"><path d="M.5 .5H4L6 3L8 .5H11.500L8 5.500L11.500 10.500H8L6 8L4 10.500H.5L4 5.500Z" fill="#fff" stroke="#444b55"/></Icon></button>
            </div>
        </div>
    )
}

function QuickBar(){
    return (
        <div className="flex h-[27px] shrink-0 items-center bg-[#f1f1f1] pl-3 pr-[13px] text-[11px] text-[#333]">
            <button aria-label="Data panel"><Icon vb="0 0 17 17" w="17" h="17"><path d="M0 0H5V5H0ZM6 0H11V5H6ZM12 0H17V5H12ZM0 6H5V11H0ZM6 6H11V11H6ZM12 6H17V11H12ZM0 12H5V17H0ZM6 12H11V17H6ZM12 12H17V17H12Z" fill="#444"/></Icon></button>
            <button className="ml-[25px] flex items-center gap-1.5" aria-label="File"><Icon vb="0 0 13 16" w="13" h="16"><path d="M0 0H8V5H13V16H0ZM9 0L13 4H9Z" fill="#444"/></Icon><Caret/></button>
            <button className="ml-[25px]" aria-label="Save"><Icon vb="0 0 16 16" w="16" h="16"><path d="M0 0H16V16H2L0 14Z" fill="#8f8f8f"/><path d="M3 2H13V8H3ZM4 11H12V16H4Z" fill="#eee"/><path d="M5 12H7V15H5Z" fill="#8f8f8f"/></Icon></button>
            <button className="ml-[25px] flex items-center gap-1.5" aria-label="Undo"><Icon vb="0 0 17 13" w="17" h="13"><path d="M0 5.500L7 0V3.500C13 3.500 16 6 16 12C13.500 8.500 11 8 7 8V11Z" fill="#444"/></Icon><Caret/></button>
            <button className="ml-3.5 flex items-center gap-1.5" aria-label="Redo"><Icon vb="0 0 17 13" w="17" h="13"><path d="M17 5.500L10 0V3.500C4 3.500 1 6 1 12C3.500 8.500 6 8 10 8V11Z" fill="#444"/></Icon><Caret/></button>
            <button className="ml-auto h-[26px] w-[109px] self-start bg-[#f9a11b] text-white">Subscribe Now</button>
            <button className="ml-3" aria-label="Comments"><Icon vb="0 0 16 15" w="16" h="15"><path d="M0 0H16V11H13V15L9 11H0Z" fill="#444"/><path d="M2 3H14M2 5.500H14M2 8H11" stroke="#f1f1f1"/></Icon></button>
            <button className="ml-6 flex items-center gap-1" aria-label="Job status"><Icon vb="0 0 16 16" w="16" h="16"><circle cx="8" cy="8" r="7" fill="none" stroke="#333" strokeWidth="2"/><path d="M8 4V8.500H12" fill="none" stroke="#333" strokeWidth="1.500"/></Icon>1</button>
            <button className="ml-[30px] flex items-center gap-1">Thomas Ryan <Caret/></button>
            <button className="ml-6 flex items-center gap-1" aria-label="Help"><Icon vb="0 0 16 16" w="16" h="16"><circle cx="8" cy="8" r="8" fill="#444"/><text x="8" y="12.500" textAnchor="middle" fontFamily="Liberation Sans, sans-serif" fontSize="13" fontWeight="700" fill="#f1f1f1">?</text></Icon><Caret/></button>
        </div>
    )
}

export default function App(){
    return (
        <div className="flex h-screen flex-col overflow-hidden bg-white font-['Liberation_Sans',sans-serif]">
            <TitleBar/>
            <div className="flex h-10 shrink-0 items-end gap-0.5 bg-[#54728d] pl-[21px]">
                <div className="flex h-[31px] w-[198px] items-center rounded-t-[3px] bg-[#f1f1f1] pl-2.5 pr-[9px] text-xs text-[#555]">
                    <Icon vb="0 0 16 16" w="16" h="16" className="mb-1"><path d="M0 3L9 0L16 2L16 11L8 16L1 12Z" fill="#5e5e5e"/><path d="M0 3L8 6V16L1 12Z" fill="#8a8a8a"/><path d="M0 3L9 0L16 2L8 6Z" fill="#494949"/></Icon>
                    <span className="ml-2.5">147223-2 v4 v2</span>
                    <Icon vb="0 0 10 10" w="10" h="10" className="mb-3 ml-auto"><circle cx="5" cy="5" r="4" fill="none" stroke="#7cc4ac" strokeWidth="1.200"/></Icon>
                    <button className="ml-2" aria-label="Close tab"><CrossIcon/></button>
                </div>
                <button className="flex h-[31px] w-[29px] items-center justify-center rounded-t-[3px] bg-[#455d74]" aria-label="New tab"><Icon vb="0 0 12 12" w="12" h="12"><path d="M6 0V12M0 6H12" stroke="#8b9dad" strokeWidth="1.500"/></Icon></button>
            </div>
            <QuickBar/>
            <div className="relative flex-1 overflow-hidden">
                <Scene/>
                <Ribbon/>
                <ViewCube/>
                <CombineDialog/>
                <BrowserPanel/>
                <NavBar/>
                <ErrorToast/>
            </div>
            <Taskbar/>
        </div>
    )
}
